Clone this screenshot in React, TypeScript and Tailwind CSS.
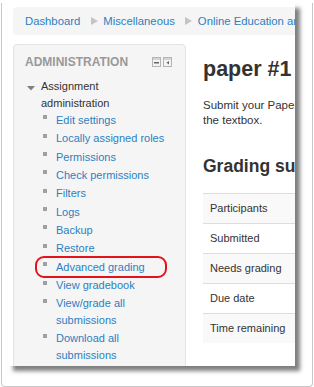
const crumbs = ['Dashboard', 'Miscellaneous', 'Online Education and Technology'];

const adminLinks: string[][] = [
  ['Edit settings'],
  ['Locally assigned roles'],
  ['Permissions'],
  ['Check permissions'],
  ['Filters'],
  ['Logs'],
  ['Backup'],
  ['Restore'],
  ['Advanced grading'],
  ['View gradebook'],
  ['View/grade all', 'submissions'],
  ['Download all', 'submissions'],
];

const summaryRows = ['Participants', 'Submitted', 'Needs grading', 'Due date', 'Time remaining'];

const Breadcrumb = () => (
  <div className="w-[300px] h-[28px] rounded-[4px] bg-[#f5f5f5] flex items-center pl-[12px] text-[11.3px] whitespace-nowrap">
    {crumbs.map((c, i) => (
      <span key={c} className="flex items-center">
        {i > 0 && (
          <svg width="7" height="8" viewBox="0 0 7 8" className="ml-[10.5px] mr-[5.5px]">
            <path d="M0 0 L7 4 L0 8 Z" fill="#c4c4c4" />
          </svg>
        )}
        <span className="text-[#2d7fc1]">{c}</span>
      </span>
    ))}
  </div>
);

const BlockIcons = () => (
  <svg width="20" height="10" viewBox="0 0 20 10" className="ml-auto mr-[2px]">
    <rect x="0.5" y="0.5" width="8" height="9" fill="#f4f4f4" stroke="#b5b5b5" />
    <rect x="1" y="1" width="7" height="2" fill="#d4d4d4" />
    <rect x="2" y="5" width="5" height="1.5" fill="#666" />
    <rect x="11.5" y="0.5" width="8" height="9" fill="#f4f4f4" stroke="#b5b5b5" />
    <rect x="12" y="1" width="7" height="2" fill="#d4d4d4" />
    <path d="M17 4 L14.5 5.75 L17 7.5 Z" fill="#666" />
  </svg>
);

const Sidebar = () => (
  <div className="w-[173px] h-[340px] shrink-0 bg-[#f5f5f5] border border-[#e3e3e3] rounded-[4px] pt-[7px] pl-[11px] pr-[11px]">
    {/* block header */}
    <div className="flex items-center h-[20px]">
      <span className="text-[12px] font-bold text-[#999] leading-[20px]">ADMINISTRATION</span>
      <BlockIcons />
    </div>

    {/* tree */}
    <div className="mt-[6px] flex">
      <div className="w-[16px] shrink-0">
        <svg width="8" height="5" viewBox="0 0 8 5" className="ml-[2px] mt-[8px]">
          <path d="M0 0 L8 0 L4 4.5 Z" fill="#808080" />
        </svg>
      </div>
      <div className="text-[11px] leading-[16.5px] text-[#333]">
        Assignment
        <br />
        administration
      </div>
    </div>
    <ul className="ml-[18px]">
      {adminLinks.map((lines) => (
        <li key={lines.join(' ')} className="relative flex py-[0.925px] text-[11px] leading-[16.5px] whitespace-nowrap">
          <span className="w-[4px] h-[4px] bg-[#a0a0a0] mt-[3.5px] shrink-0" />
          <span className="ml-[9px] text-[#2d7fc1]">
            {lines.map((l, i) => (
              <span key={l}>
                {i > 0 && <br />}
                {l}
              </span>
            ))}
          </span>
          {lines[0] === 'Advanced grading' && (
            <span className="absolute left-[-8px] top-[-1.3px] w-[132px] h-[21.3px] border-2 border-[#e3131b] rounded-[9px]" />
          )}
        </li>
      ))}
    </ul>
  </div>
);

const Main = () => (
  <div className="ml-[17px] w-[400px] shrink-0 text-[#333] whitespace-nowrap">
    <h2 className="mt-[12px] text-[21.5px] font-bold leading-[26px]">paper #1</h2>
    <p className="mt-[16px] text-[11.5px] leading-[14.5px]">
      Submit your Paper here by typing it or pasting it into
      <br />
      the textbox.
    </p>
    <h3 className="mt-[29px] text-[17.5px] font-bold leading-[21px]">Grading summary</h3>
    <div className="mt-[16px] w-[380px]">
      {summaryRows.map((r, i) => (
        <div
          key={r}
          className={`h-[30px] flex items-center pl-[7px] text-[11px] border-t border-[#dddddd] ${i % 2 === 0 ? 'bg-[#f9f9f9]' : 'bg-white'}`}
        >
          {r}
        </div>
      ))}
    </div>
  </div>
);

export default function App() {
  return (
    <div className="w-[314px] h-[387px] bg-white overflow-hidden font-['Liberation_Sans',Arial,sans-serif]">
      <div className="ml-[1px] w-[312px] h-[384px] border border-t-0 border-[#c8c8c8] rounded-b-[4px]">
        <div className="ml-[6px] mt-[3px] w-[287px] h-[363px] bg-white overflow-hidden shadow-[5px_5px_4px_rgba(0,0,0,0.5)] pl-[5px] pt-[4px]">
          <Breadcrumb />
          <div className="flex items-start mt-[9px]">
            <Sidebar />
            <Main />
          </div>
        </div>
      </div>
    </div>
  );
}
